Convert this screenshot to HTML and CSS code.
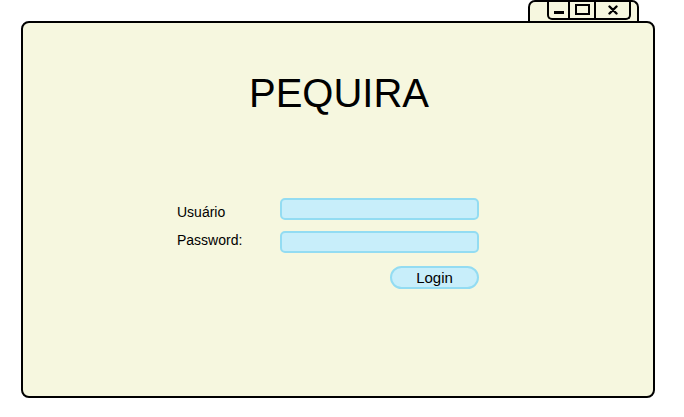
FILE: index.html
```html
<!DOCTYPE html>
<html lang="pt">
<head>
<meta charset="utf-8">
<title>PEQUIRA</title>
<link rel="stylesheet" href="styles.css">
</head>
<body>
<div class="screen">
  <div class="tabrow">
    <div class="tab">
      <div class="winbtns">
        <div class="wb wb-min"><span class="dash"></span></div>
        <div class="wb wb-max"><span class="box"></span></div>
        <div class="wb wb-close">
          <svg width="10" height="10" viewBox="0 0 10 10"><path d="M1.5 1.5 L8.5 8.5 M8.5 1.5 L1.5 8.5" stroke="#000" stroke-width="2.4" stroke-linecap="round"/></svg>
        </div>
      </div>
    </div>
  </div>
  <div class="window">
    <h1 class="title">PEQUIRA</h1>
    <form class="login">
      <label class="lbl lbl-user">Usuário</label>
      <div class="field"></div>
      <label class="lbl lbl-pass">Password:</label>
      <div class="field"></div>
      <div class="actions"><button type="button" class="btn">Login</button></div>
    </form>
  </div>
</div>
</body>
</html>
```

FILE: styles.css
```css
html, body {
  margin: 0;
  padding: 0;
  background: #ffffff;
  font-family: "Liberation Sans", Arial, sans-serif;
}
.screen {
  width: 684px;
  height: 417px;
  padding-left: 21px;
  box-sizing: border-box;
}
.tabrow {
  width: 634px;
  display: flex;
  justify-content: flex-end;
  padding-right: 16px;
  box-sizing: border-box;
  height: 21px;
  position: relative;
  z-index: 0;
}
.tab {
  width: 111px;
  height: 24px;
  box-sizing: border-box;
  border: 2px solid #000;
  border-bottom: none;
  border-radius: 7px 7px 0 0;
  background: #f6f7df;
  padding-left: 17px;
}
.winbtns {
  width: 84px;
  height: 18px;
  box-sizing: border-box;
  border: 2px solid #000;
  border-top: none;
  border-radius: 0 0 5px 5px;
  display: flex;
  background: #f6f7df;
}
.wb {
  display: flex;
  align-items: center;
  justify-content: center;
  height: 100%;
}
.wb-min { width: 19px; border-right: 2px solid #000; }
.wb-max { width: 24px; border-right: 2px solid #000; }
.wb-close { flex: 1; }
.dash {
  display: block;
  width: 10px;
  height: 3px;
  background: #000;
  margin-top: 5px;
}
.box {
  display: block;
  width: 11px;
  height: 7px;
  border: 2px solid #000;
  margin-top: -2px;
}
.window {
  position: relative;
  z-index: 1;
  width: 634px;
  height: 377px;
  box-sizing: border-box;
  border: 2px solid #000;
  border-radius: 8px;
  background: #f6f7df;
  padding-top: 47px;
}
.title {
  margin: 0;
  text-align: center;
  font-weight: normal;
  font-size: 40px;
  line-height: 46px;
  color: #000;
  padding-left: 2px;
}
.login {
  margin: 82px 0 0 154px;
  display: grid;
  grid-template-columns: 103px 199px;
  row-gap: 11px;
  align-items: start;
}
.lbl {
  font-size: 14px;
  line-height: 16px;
  color: #000;
}
.lbl-user { margin-top: 6px; }
.lbl-pass { margin-top: 1px; }
.field {
  height: 22px;
  box-sizing: border-box;
  border: 2px solid #93dcf2;
  border-radius: 5px;
  background: #c8eefa;
}
.actions {
  grid-column: 2;
  display: flex;
  justify-content: flex-end;
  margin-top: 2px;
}
.btn {
  width: 89px;
  height: 23px;
  box-sizing: border-box;
  border: 2px solid #93dcf2;
  border-radius: 12px;
  background: #c8eefa;
  font-family: "Liberation Sans", Arial, sans-serif;
  font-size: 15px;
  color: #000;
  padding: 0;
  line-height: 19px;
}
```
